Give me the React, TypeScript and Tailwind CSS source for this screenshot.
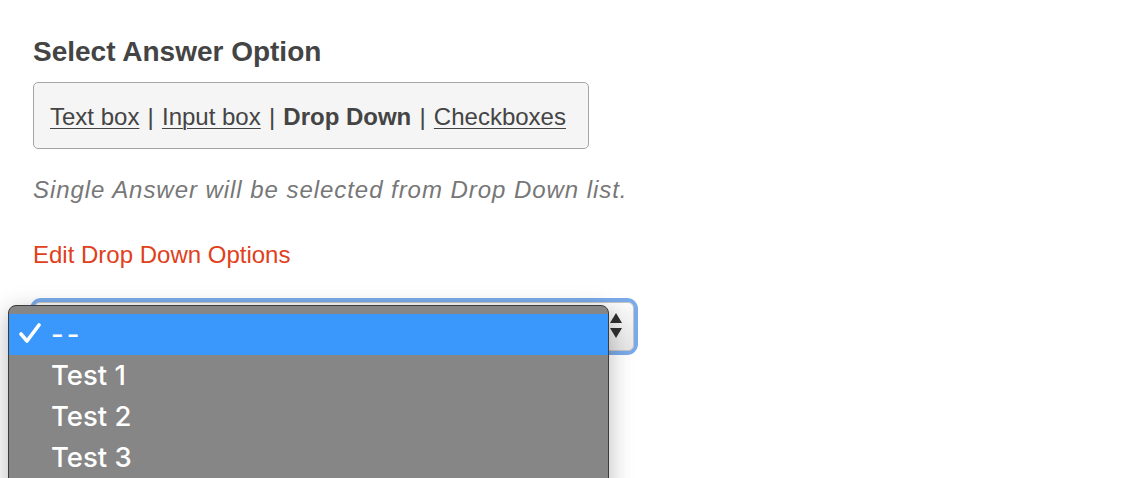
import React from "react";

// ==========================================
// DROP DOWN POPUP (open native-style menu)
// ==========================================
const options = ["--", "Test 1", "Test 2", "Test 3"];

const CheckMark = () => (
  <svg width="22" height="22" viewBox="0 0 22 22" className="absolute left-[10px] top-[9px]">
    <polyline
      points="2,11 8,18 20,2"
      fill="none"
      stroke="#ffffff"
      strokeWidth="3.6"
      strokeLinecap="round"
      strokeLinejoin="round"
    />
  </svg>
);

const DropDownMenu = () => (
  <div className="absolute left-[-26px] top-[3px] w-[601px] h-[240px] pt-[8px] bg-[#868686] border border-[#3c3c3c] rounded-t-[8px] shadow-[0_6px_24px_rgba(0,0,0,0.28)] z-10">
    {options.map((opt, i) => (
      <div
        key={opt}
        className={`relative h-[41px] pl-[42px] text-[27.5px] leading-[41px] font-medium text-white ${
          i === 0 ? "bg-[#3a97fb]" : ""
        }`}
        style={{ fontFamily: "Inter, sans-serif" }}
      >
        {i === 0 && <CheckMark />}
        <span className={i === 0 ? "tracking-[3px]" : ""}>{opt}</span>
      </div>
    ))}
  </div>
);

// ==========================================
// SELECT ARROWS
// ==========================================
const Arrows = () => (
  <svg width="12" height="26" viewBox="0 0 12 26" className="absolute right-[11px] top-[10px]">
    <polygon points="6,0 12,10 0,10" fill="#2f2f2f" />
    <polygon points="0,15 12,15 6,25" fill="#2f2f2f" />
  </svg>
);

const Sep = () => <span className="mx-[1.5px]"> | </span>;

export default function App() {
  return (
    <div
      className="h-screen overflow-hidden bg-white pl-[33px] pt-[36px]"
      style={{ fontFamily: '"Liberation Sans", Arial, sans-serif' }}
    >
      <h2 className="text-[28px] leading-[32px] font-bold text-[#444444]">Select Answer Option</h2>

      {/* Answer type switcher */}
      <div className="mt-[14px] w-[556px] h-[67px] pl-[16px] pt-[20px] pb-[17px] bg-[#f5f5f5] border border-[#a5a5a5] rounded-[5px] text-[24px] leading-[28px] text-[#444444] whitespace-nowrap">
        <span className="underline underline-offset-[3px] decoration-1">Text box</span>
        <Sep />
        <span className="underline underline-offset-[3px] decoration-1">Input box</span>
        <Sep />
        <span className="font-bold">Drop Down</span>
        <Sep />
        <span className="underline underline-offset-[3px] decoration-1">Checkboxes</span>
      </div>

      <p className="mt-[27px] text-[24px] leading-[28px] italic text-[#777777] tracking-[0.95px]">
        Single Answer will be selected from Drop Down list.
      </p>

      <p className="mt-[37px] text-[24px] leading-[28px] text-[#e0401b]">Edit Drop Down Options</p>

      {/* Focused select with open menu */}
      <div className="relative mt-[29px] ml-[-3px] w-[608px] h-[57px] border-4 border-[#7aaaea] rounded-[11px]">
        <div className="relative h-full rounded-[6px] border border-[#c4c4c4] bg-gradient-to-b from-[#fbfbfb] to-[#e6e6e6]">
          <Arrows />
        </div>
        <DropDownMenu />
      </div>
    </div>
  );
}
